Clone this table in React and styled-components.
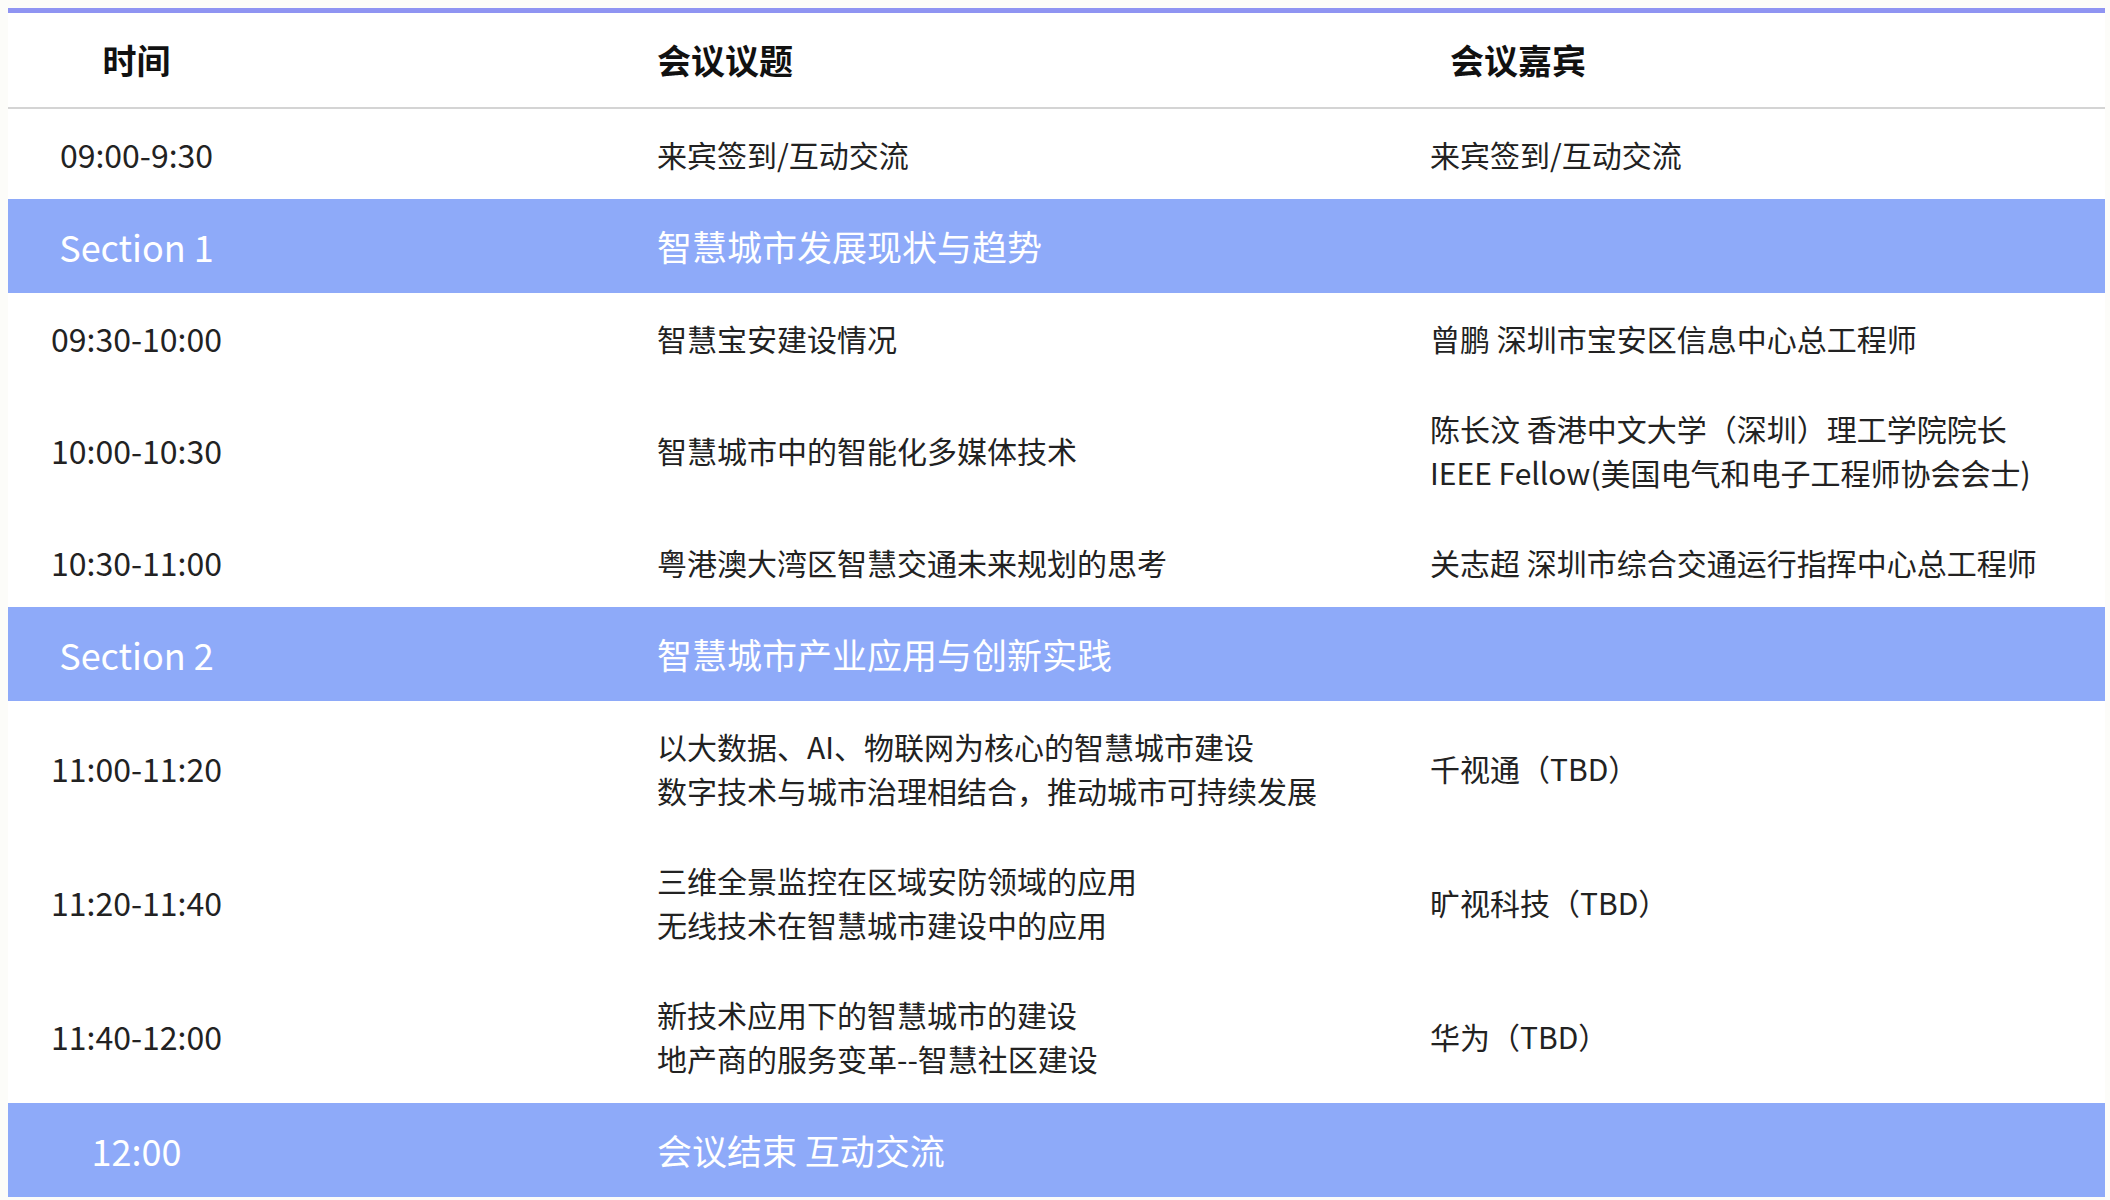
import React from "react";
import styled, { createGlobalStyle } from "styled-components";

const Global = createGlobalStyle`
  html, body { margin: 0; padding: 0; background: #fcfcf9; }
  body { font-family: "Noto Sans CJK SC", "Noto Sans", sans-serif; color: #222; }
`;

const Table = styled.div`
  margin: 8px 0 0 8px;
  width: 2097px;
  background: #ffffff;
  border-top: 5px solid #8f94f2;
`;

const Row = styled.div`
  display: grid;
  grid-template-columns: 629px 773px 1fr;
  align-items: center;
  padding: ${(p) => p.$pad}px 0;
  background: ${(p) => (p.$section ? "#8eaaf9" : "#ffffff")};
  color: ${(p) => (p.$section ? "#ffffff" : "#222222")};
  font-size: ${(p) => (p.$section ? 35 : 30)}px;
  line-height: 44px;
  border-bottom: ${(p) => (p.$head ? "2px solid #d4d4d4" : "none")};
`;

const HeadRow = styled(Row)`
  font-size: 34px;
  font-weight: 700;
  color: #111;
`;

const TimeCell = styled.div`
  padding-right: 372px;
  text-align: center;
  white-space: nowrap;
  font-size: ${(p) => (p.$size ? `${p.$size}px` : "inherit")};
`;

const TopicCell = styled.div`
  padding-left: 20px;
  white-space: nowrap;
`;

const GuestCell = styled.div`
  padding-left: ${(p) => (p.$head ? 40 : 20)}px;
  white-space: nowrap;
`;

const Line = styled.div``;

const rows = [
  { t: "09:00-9:30", topic: ["来宾签到/互动交流"], guest: ["来宾签到/互动交流"] },
  { section: true, t: "Section 1", topic: ["智慧城市发展现状与趋势"], guest: [] },
  { t: "09:30-10:00", topic: ["智慧宝安建设情况"], guest: ["曾鹏 深圳市宝安区信息中心总工程师"] },
  {
    t: "10:00-10:30",
    topic: ["智慧城市中的智能化多媒体技术"],
    guest: ["陈长汶 香港中文大学（深圳）理工学院院长", "IEEE Fellow(美国电气和电子工程师协会会士)"],
  },
  { t: "10:30-11:00", topic: ["粤港澳大湾区智慧交通未来规划的思考"], guest: ["关志超 深圳市综合交通运行指挥中心总工程师"] },
  { section: true, t: "Section 2", topic: ["智慧城市产业应用与创新实践"], guest: [] },
  {
    t: "11:00-11:20",
    topic: ["以大数据、AI、物联网为核心的智慧城市建设", "数字技术与城市治理相结合，推动城市可持续发展"],
    guest: ["千视通（TBD）"],
  },
  {
    t: "11:20-11:40",
    topic: ["三维全景监控在区域安防领域的应用", "无线技术在智慧城市建设中的应用"],
    guest: ["旷视科技（TBD）"],
  },
  {
    t: "11:40-12:00",
    topic: ["新技术应用下的智慧城市的建设", "地产商的服务变革--智慧社区建设"],
    guest: ["华为（TBD）"],
  },
  { section: true, t: "12:00", topic: ["会议结束 互动交流"], guest: [] },
];

export default function App() {
  return (
    <>
      <Global />
      <Table>
        <HeadRow $head $pad={25}>
          <TimeCell>时间</TimeCell>
          <TopicCell>会议议题</TopicCell>
          <GuestCell $head>会议嘉宾</GuestCell>
        </HeadRow>
        {rows.map((r, i) => (
          <Row key={i} $section={r.section} $pad={r.section ? 25 : 23}>
            <TimeCell $size={r.section ? 36 : 32}>{r.t}</TimeCell>
            <TopicCell>
              {r.topic.map((l, j) => (
                <Line key={j}>{l}</Line>
              ))}
            </TopicCell>
            <GuestCell>
              {r.guest.map((l, j) => (
                <Line key={j}>{l}</Line>
              ))}
            </GuestCell>
          </Row>
        ))}
      </Table>
    </>
  );
}
